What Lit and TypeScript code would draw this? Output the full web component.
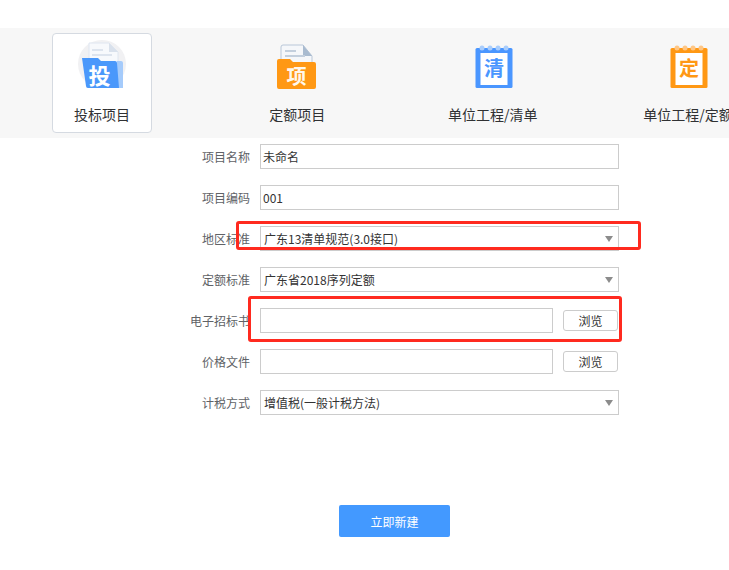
import { LitElement, html, css, svg } from "lit";
import { customElement } from "lit/decorators.js";

const FOLDER_BLUE = "#4a98fb";
const ORANGE = "#ff9814";
const BLUE = "#4a96ff";

const bidIcon = svg`
  <circle cx="25" cy="25" r="24" fill="#f1f1f3"/>
  <path d="M12 4h20l9 9v22H12z" fill="#f7f9fc" stroke="#dfe6f0"/>
  <path d="M32 4l9 9h-9z" fill="#d9e1ec"/>
  <rect x="15" y="10" width="11" height="2" fill="#dde4ee"/>
  <rect x="15" y="15" width="20" height="2" fill="#dde4ee"/>
  <path d="M40 22h4a2 2 0 0 1 2 2v25h-6z" fill="#a5cbfb"/>
  <path d="M5 19h16l3 3h14a2 2 0 0 1 2 2l2 25H11a2 2 0 0 1-2-2z" fill="${FOLDER_BLUE}"/>
  <text x="22.500" y="45" text-anchor="middle" class="glyph" font-size="22" fill="#fff">投</text>`;

const quotaIcon = svg`
  <path d="M11 6h20l9 11v10H9V8a2 2 0 0 1 2-2z" fill="#f5f7fa" stroke="#b9c7d8"/>
  <path d="M31 6l9 11h-9z" fill="#a9bbd0"/>
  <rect x="13" y="11" width="11" height="2" fill="#c3cfdd"/>
  <rect x="13" y="16" width="20" height="2" fill="#c3cfdd"/>
  <path d="M7 20h11l3 3h21a2 2 0 0 1 2 2v23a2 2 0 0 1-2 2H7a2 2 0 0 1-2-2V22a2 2 0 0 1 2-2z" fill="${ORANGE}"/>
  <text x="24.500" y="45" text-anchor="middle" class="glyph" font-size="20" fill="#fff8ec">项</text>`;

const bookIcon = (color: string, ring: string, ch: string) => svg`
  <rect x="7.500" y="9" width="37" height="40" rx="1.500" fill="${color}"/>
  ${[14, 22, 30, 38].map(
    (x) => svg`<circle cx="${x}" cy="9" r="2.500" fill="${ring}"/>`
  )}
  <rect x="12.500" y="14" width="27" height="32" fill="#fff"/>
  <text x="26" y="37" text-anchor="middle" class="glyph" font-size="20" fill="${color}">${ch}</text>`;

const items = [
  { label: "投标项目", icon: bidIcon, active: true },
  { label: "定额项目", icon: quotaIcon, active: false },
  { label: "单位工程/清单", icon: bookIcon(BLUE, "#a9cdfc", "清"), active: false },
  { label: "单位工程/定额", icon: bookIcon(ORANGE, "#ffc684", "定"), active: false },
];

type Row =
  | { label: string; kind: "text"; value: string }
  | { label: string; kind: "select"; value: string }
  | { label: string; kind: "file" };

const rows: Row[] = [
  { label: "项目名称", kind: "text", value: "未命名" },
  { label: "项目编码", kind: "text", value: "001" },
  { label: "地区标准", kind: "select", value: "广东13清单规范(3.0接口)" },
  { label: "定额标准", kind: "select", value: "广东省2018序列定额" },
  { label: "电子招标书", kind: "file" },
  { label: "价格文件", kind: "file" },
  { label: "计税方式", kind: "select", value: "增值税(一般计税方法)" },
];

@customElement("app-root")
export class AppRoot extends LitElement {
  static styles = css`
    :host {
      display: block;
      position: relative;
      width: 729px;
      height: 570px;
      overflow: hidden;
      background: #fff;
      padding-top: 28px;
      box-sizing: border-box;
      font-family: "Noto Sans CJK SC", "Liberation Sans", sans-serif;
      font-size: 12px;
      color: #333;
    }
    .band {
      display: flex;
      gap: 95.33px;
      box-sizing: border-box;
      height: 110px;
      padding: 5px 0 0 52px;
      background: #f7f7f7;
      overflow: hidden;
    }
    .item {
      flex: 0 0 100px;
      box-sizing: border-box;
      height: 100px;
      border: 1px solid transparent;
      border-radius: 4px;
      display: flex;
      flex-direction: column;
      align-items: center;
      padding-top: 5px;
    }
    .item.active {
      background: #fff;
      border-color: #d5dae1;
    }
    .item svg {
      display: block;
      flex: none;
      width: 50px;
      height: 50px;
      overflow: visible;
    }
    .glyph {
      font-weight: 700;
      font-family: "Noto Sans CJK SC", sans-serif;
    }
    .item-label {
      margin-top: 15px;
      font-size: 14px;
      line-height: 20px;
      white-space: nowrap;
      color: #303133;
    }
    form {
      display: flex;
      flex-direction: column;
      gap: 16px;
      margin: 6px 0 0 0;
    }
    .row {
      display: flex;
      align-items: center;
      height: 25px;
    }
    .label {
      flex: none;
      width: 250px;
      text-align: right;
      color: #606266;
      white-space: nowrap;
      margin-right: 10px;
    }
    .control {
      box-sizing: border-box;
      flex: none;
      height: 25px;
      width: 359px;
      border: 1px solid #ccc;
      background: #fff;
      font: inherit;
      color: #333;
      padding: 0 2px;
      outline: none;
      border-radius: 0;
      margin: 0;
    }
    .control.short {
      width: 293px;
    }
    .control.dropdown {
      display: flex;
      align-items: center;
      justify-content: space-between;
      padding: 0 5px 0 3px;
    }
    .caret {
      width: 0;
      height: 0;
      border-left: 4px solid transparent;
      border-right: 4px solid transparent;
      border-top: 6px solid #8c8c8c;
      margin-top: 1px;
    }
    .browse {
      box-sizing: border-box;
      flex: none;
      width: 55px;
      height: 21px;
      margin-left: 10px;
      padding: 0;
      border: 1px solid #ccc;
      border-radius: 3px;
      background: #fff;
      font: inherit;
      color: #333;
    }
    .actions {
      padding-left: 339px;
      margin-top: 74px;
    }
    .submit {
      display: block;
      width: 111px;
      height: 32px;
      padding: 0;
      border: 0;
      border-radius: 2px;
      background: #4399ff;
      color: #fff;
      font: inherit;
    }
    .mark {
      position: absolute;
      box-sizing: border-box;
      border: 3px solid #ff2a1f;
      border-radius: 3px;
      pointer-events: none;
    }
    .mark.region {
      left: 236px;
      top: 221px;
      width: 405px;
      height: 29px;
    }
    .mark.tender {
      left: 248px;
      top: 296px;
      width: 374px;
      height: 46px;
    }
  `;

  private renderControl(r: Row) {
    if (r.kind === "text") {
      return html`<input class="control" type="text" .value=${r.value} />`;
    }
    if (r.kind === "select") {
      return html`<div class="control dropdown"><span>${r.value}</span><i class="caret"></i></div>`;
    }
    return html`<input class="control short" type="text" /><button class="browse" type="button">浏览</button>`;
  }

  render() {
    return html`
      <div class="band">
        ${items.map(
          (it) => html`
            <div class="item ${it.active ? "active" : ""}">
              <svg viewBox="0 0 50 50">${it.icon}</svg>
              <div class="item-label">${it.label}</div>
            </div>
          `
        )}
      </div>
      <form>
        ${rows.map(
          (r) => html`
            <div class="row">
              <div class="label">${r.label}</div>
              ${this.renderControl(r)}
            </div>
          `
        )}
        <div class="actions"><button class="submit" type="button">立即新建</button></div>
      </form>
      <div class="mark region"></div>
      <div class="mark tender"></div>
    `;
  }
}
